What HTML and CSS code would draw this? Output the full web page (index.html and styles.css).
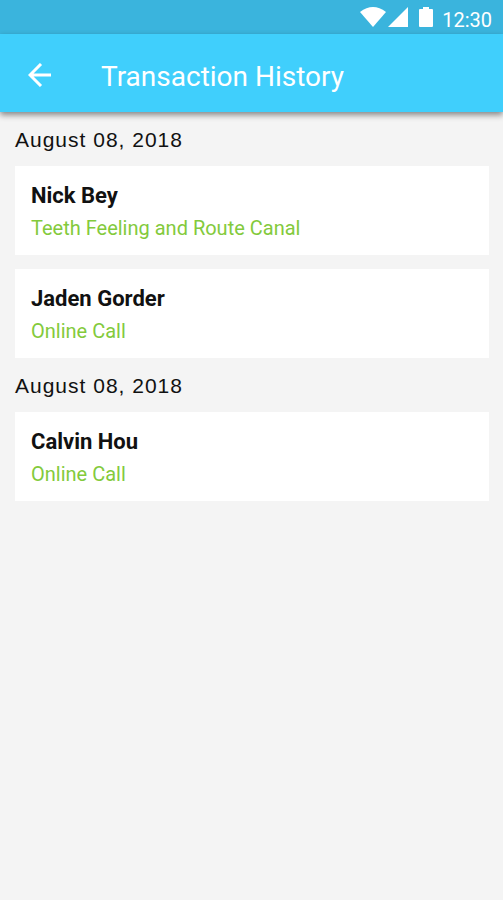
FILE: index.html
```html
<!DOCTYPE html>
<html lang="en">
<head>
<meta charset="utf-8">
<meta name="viewport" content="width=device-width, initial-scale=1">
<title>Transaction History</title>
<link rel="stylesheet" href="styles.css">
</head>
<body>
<div class="status-bar">
  <svg class="wifi" viewBox="0 0 26 20" aria-hidden="true"><path d="M0 5Q13-5 26 5L13 20Z"/></svg>
  <svg class="signal" viewBox="0 0 20 20" aria-hidden="true"><path d="M20 0V20H0Z"/></svg>
  <svg class="battery" viewBox="0 0 14 20" aria-hidden="true"><path d="M4 0H10V2H13Q14 2 14 3V19Q14 20 13 20H1Q0 20 0 19V3Q0 2 1 2H4Z"/></svg>
  <span class="clock">12:30</span>
</div>
<header class="app-bar">
  <button class="back" type="button" aria-label="Back">
    <svg viewBox="0 0 24 24" aria-hidden="true"><path d="M23 12H2M13 1L2 12L13 23"/></svg>
  </button>
  <h1>Transaction History</h1>
</header>
<main>
  <section>
    <h2>August 08, 2018</h2>
    <ul>
      <li class="card"><h3>Nick Bey</h3><p>Teeth Feeling and Route Canal</p></li>
      <li class="card"><h3>Jaden Gorder</h3><p>Online Call</p></li>
    </ul>
  </section>
  <section>
    <h2>August 08, 2018</h2>
    <ul>
      <li class="card"><h3>Calvin Hou</h3><p>Online Call</p></li>
    </ul>
  </section>
</main>
</body>
</html>
```
FILE: styles.css
```css
* { box-sizing: border-box; }
body {
  margin: 0;
  min-height: 100vh;
  background: #f4f4f4;
  color: #111;
  font-family: Roboto, sans-serif;
}
h1, h2, h3, p, ul { margin: 0; padding: 0; }
ul { list-style: none; display: grid; gap: 14px; }
.status-bar {
  display: flex;
  align-items: baseline;
  justify-content: flex-end;
  height: 34px;
  padding: 7px 11px 0 0;
  background: #3ab4dd;
  color: #fff;
}
.status-bar svg { height: 20px; fill: #fff; }
.wifi { width: 26px; }
.signal { width: 20px; margin-left: 2px; }
.battery { width: 14px; margin: 0 9px 0 11px; }
.clock { font-size: 20px; line-height: 20px; }
.app-bar {
  display: flex;
  align-items: center;
  height: 78px;
  padding: 4px 16px 0 16px;
  background: #40cffc;
  color: #fff;
  box-shadow: 0 3px 6px rgba(0, 0, 0, 0.45);
}
.back {
  display: grid;
  place-items: center;
  width: 48px;
  height: 48px;
  padding: 0;
  border: 0;
  background: none;
}
.back svg { width: 24px; height: 24px; fill: none; stroke: #fff; stroke-width: 3; }
h1 { margin-left: 37px; padding-top: 4px; font-size: 28px; line-height: 36px; font-weight: 400; }
main { padding: 14px 14px 24px 15px; }
h2 {
  padding-bottom: 12px;
  font-family: "Liberation Sans", sans-serif;
  font-size: 21px;
  line-height: 28px;
  font-weight: 400;
  letter-spacing: 1px;
}
section + section { margin-top: 14px; }
.card { padding: 16px 16px 15px; background: #fff; }
.card h3 { font-size: 22px; line-height: 28px; font-weight: 700; }
.card p { margin-top: 6px; font-size: 20px; line-height: 24px; color: #83ca3c; }
```
